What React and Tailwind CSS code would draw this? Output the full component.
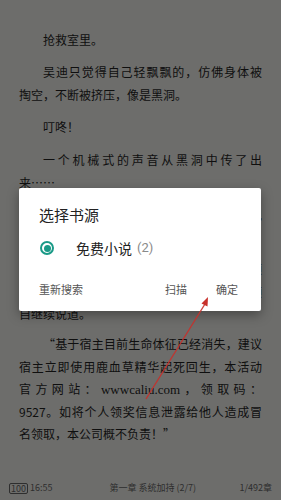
import React from 'react';

const font = { fontFamily: '"Noto Sans CJK SC", "Noto Sans", sans-serif' };

function Line({ text, indent, full, children }) {
  return (
    <div
      className={`h-[22.5px] leading-[22.5px] whitespace-nowrap ${indent ? 'pl-[24px]' : ''} ${
        full ? 'text-justify [text-align-last:justify]' : ''
      }`}
    >
      {children || text}
    </div>
  );
}

export default function App() {
  return (
    <div className="relative w-[281px] h-[500px] overflow-hidden bg-[#6d6d6b]" style={font}>
      <div className="px-[19px] pt-[29px] text-[12px] text-[#0f0f0f]">
        <div>
          <Line text="抢救室里。" indent />
        </div>
        <div className="mt-[9.5px]">
          <Line text="吴迪只觉得自己轻飘飘的，仿佛身体被" indent full />
          <Line text="掏空，不断被挤压，像是黑洞。" />
        </div>
        <div className="mt-[10px]">
          <Line text="叮咚！" indent />
        </div>
        <div className="mt-[10.5px]">
          <Line text="一个机械式的声音从黑洞中传了出" indent full />
          <Line text="来……" />
        </div>
        <div className="mt-[9.5px]">
          <Line text="吴迪心中一惊，想要开口询问，却发现" indent full />
          <Line text="自己根本发不出任何声音。" />
        </div>
        <div className="mt-[9.5px]">
          <Line text="机械声音似乎并不在意他的反应，停顿" indent full />
          <Line text="了片刻之后，那个声音便又再次响起，自顾" full />
          <Line text="自继续说道。" />
        </div>
        <div className="mt-[7.5px]">
          <Line text="“基于宿主目前生命体征已经消失，建议" indent full />
          <Line text="宿主立即使用鹿血草精华起死回生，本活动" full />
          <Line full>
            官方网站：<span style={{ fontFamily: '"Liberation Serif", serif' }} className="text-[13px]">wwwcaliu.com</span>，领取码：
          </Line>
          <Line text="9527。如将个人领奖信息泄露给他人造成冒" full />
          <Line text="名领取，本公司概不负责！”" />
        </div>
      </div>

      {/* dialog */}
      <div className="absolute left-[19px] top-[188px] w-[242px] h-[123px] bg-white rounded-[2px] shadow-[0_4px_12px_rgba(0,0,0,0.35)]">
        <div className="pl-[20px] pt-[16px] text-[15px] leading-[22px] text-[#222]">选择书源</div>
        <div className="flex items-center pl-[21px] mt-[11px] h-[22px]">
          <span className="w-[14px] h-[14px] rounded-full border-[2px] border-[#1a9a87] flex items-center justify-center">
            <span className="w-[7px] h-[7px] rounded-full bg-[#1a9a87]" />
          </span>
          <span className="ml-[22px] text-[14px] text-[#222]">免费小说</span>
          <span className="ml-[5px] text-[13px] text-[#8a8a8a]" style={{ fontFamily: 'Roboto, sans-serif' }}>(2)</span>
        </div>
        <div className="flex items-center pl-[20px] mt-[22px] h-[16px] text-[11px] text-[#555]">
          <span>重新搜索</span>
          <span className="ml-auto">扫描</span>
          <span className="ml-[29px] mr-[23px]">确定</span>
        </div>
      </div>

      {/* red arrow */}
      <svg className="absolute left-0 top-0" width="281" height="500">
        <line x1="146" y1="399" x2="205" y2="304" stroke="#c8302b" strokeWidth="1.4" opacity="0.9" />
        <polygon points="208,297 201.5,303.5 207.5,306.5" fill="#c8302b" />
      </svg>

      {/* footer */}
      <div className="absolute left-0 bottom-0 w-full h-[24px] flex items-center px-[9px] text-[9px] text-[#2e2e2e]">
        <span className="border border-[#2e2e2e] rounded-[2px] px-[1px] leading-[9px]">100</span>
        <span className="ml-[2px]">16:55</span>
        <span className="ml-[57px]">第一章 系统加持 (2/7)</span>
        <span className="ml-auto">1/492章</span>
      </div>
    </div>
  );
}
